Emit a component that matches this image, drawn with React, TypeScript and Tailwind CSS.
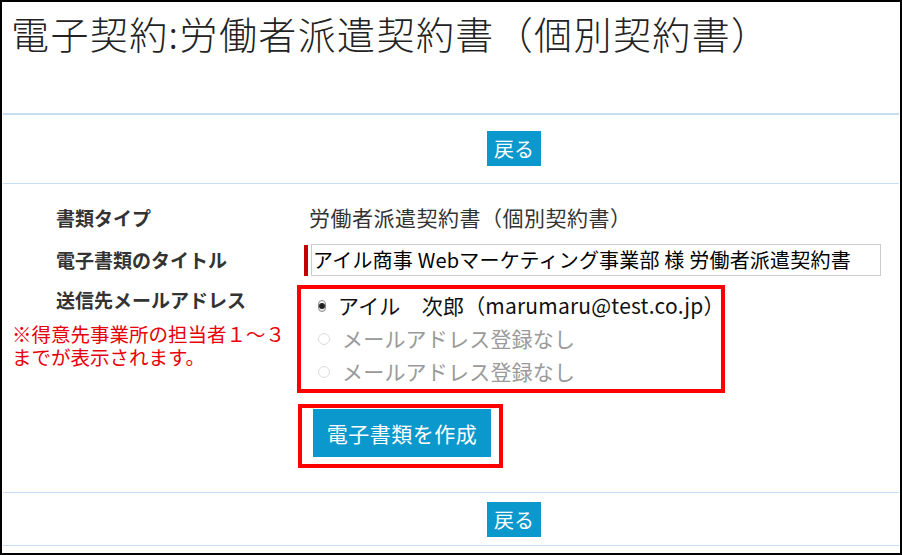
import React from 'react';

const font = "font-['Noto_Sans_CJK_JP','Noto_Sans',sans-serif]";

const BackButton: React.FC = () => (
  <button className="w-[54px] h-[35px] bg-[#0b98cc] text-white text-[20px] leading-none flex items-center justify-center">
    戻る
  </button>
);

const Radio: React.FC<{ checked?: boolean; disabled?: boolean; label: string }> = ({ checked, disabled, label }) => (
  <label className="h-[33px] flex items-center gap-[12px]">
    <span
      className={
        checked
          ? 'w-[12px] h-[12px] rounded-full border border-[#8a8a8a] bg-gradient-to-b from-white to-[#e6e6e6] flex items-center justify-center'
          : 'w-[12px] h-[12px] rounded-full border border-[#dcdcdc] bg-white'
      }
    >
      {checked && <span className="w-[6px] h-[6px] rounded-full bg-[#222]" />}
    </span>
    <span className={`text-[21px] leading-none whitespace-nowrap tracking-[0.2px] ${disabled ? 'text-[#9a9a9a]' : 'text-[#111]'}`}>
      {label}
    </span>
  </label>
);

export default function App() {
  return (
    <div className={`w-[902px] h-[555px] border-2 border-black bg-white overflow-hidden ${font}`}>
      {/* Page title */}
      <div className="h-[113px] mx-[1px] border-b-2 border-[#c6def3] pl-[8px] pt-[6px]">
        <h1 className="text-[38px] leading-[50px] font-light tracking-[1.4px] text-[#222] whitespace-nowrap">
          電子契約:労働者派遣契約書（個別契約書）
        </h1>
      </div>

      {/* Top back link */}
      <div className="h-[69px] mx-[1px] border-b border-[#c6def3] pt-[16px] pl-[484px]">
        <BackButton />
      </div>

      {/* Form */}
      <div className="mx-[1px] border-b border-[#c6def3] pt-[14px] pb-[24px]">
        <div className="h-[40px] flex items-center">
          <span className="w-[294px] pl-[53px] text-[19px] font-bold text-[#333]">書類タイプ</span>
          <span className="pl-[12px] text-[21px] tracking-[0.5px] text-[#333] whitespace-nowrap">労働者派遣契約書（個別契約書）</span>
        </div>

        <div className="h-[44px] flex items-center">
          <span className="w-[294px] pl-[53px] text-[19px] font-bold text-[#333]">電子書類のタイトル</span>
          <div className="pl-[7px] flex items-center gap-[3px]">
            <span className="w-[4px] h-[31px] bg-[#c40000]" />
            <div className="w-[570px] h-[32px] border border-[#cccccc] pl-[1px] text-[20px] leading-[30px] tracking-[0.2px] text-black whitespace-nowrap overflow-hidden">
              アイル商事 Webマーケティング事業部 様 労働者派遣契約書
            </div>
          </div>
        </div>

        <div className="mt-[3px] flex">
          <div className="w-[294px]">
            <div className="pl-[53px] pt-[3px] text-[19px] leading-[24px] font-bold text-[#333]">送信先メールアドレス</div>
            <div className="pl-[9px] mt-[10px] text-[19.5px] font-normal text-[#e8000b] whitespace-nowrap">
              <div className="h-[23px] leading-[23px]">※得意先事業所の担当者１～３</div>
              <div className="h-[23px] leading-[23px]">までが表示されます。</div>
            </div>
          </div>
          <div className="w-[428px] h-[108px] border-4 border-[#ff0000] pl-[17px]">
            <Radio checked label="アイル　次郎（marumaru@test.co.jp）" />
            <Radio disabled label="メールアドレス登録なし" />
            <Radio disabled label="メールアドレス登録なし" />
          </div>
        </div>

        <div className="mt-[11px] ml-[295px] w-fit border-4 border-[#ff0000] pt-[1px] pb-[7px] pl-[11px] pr-[8px]">
          <button className="w-[178px] h-[48px] bg-[#0b98cc] text-white text-[21px] leading-none tracking-[0.5px] flex items-center justify-center">
            電子書類を作成
          </button>
        </div>
      </div>

      {/* Bottom back link */}
      <div className="h-[53px] mx-[1px] border-b border-[#c6def3] pt-[9px] pl-[484px]">
        <BackButton />
      </div>
    </div>
  );
}
